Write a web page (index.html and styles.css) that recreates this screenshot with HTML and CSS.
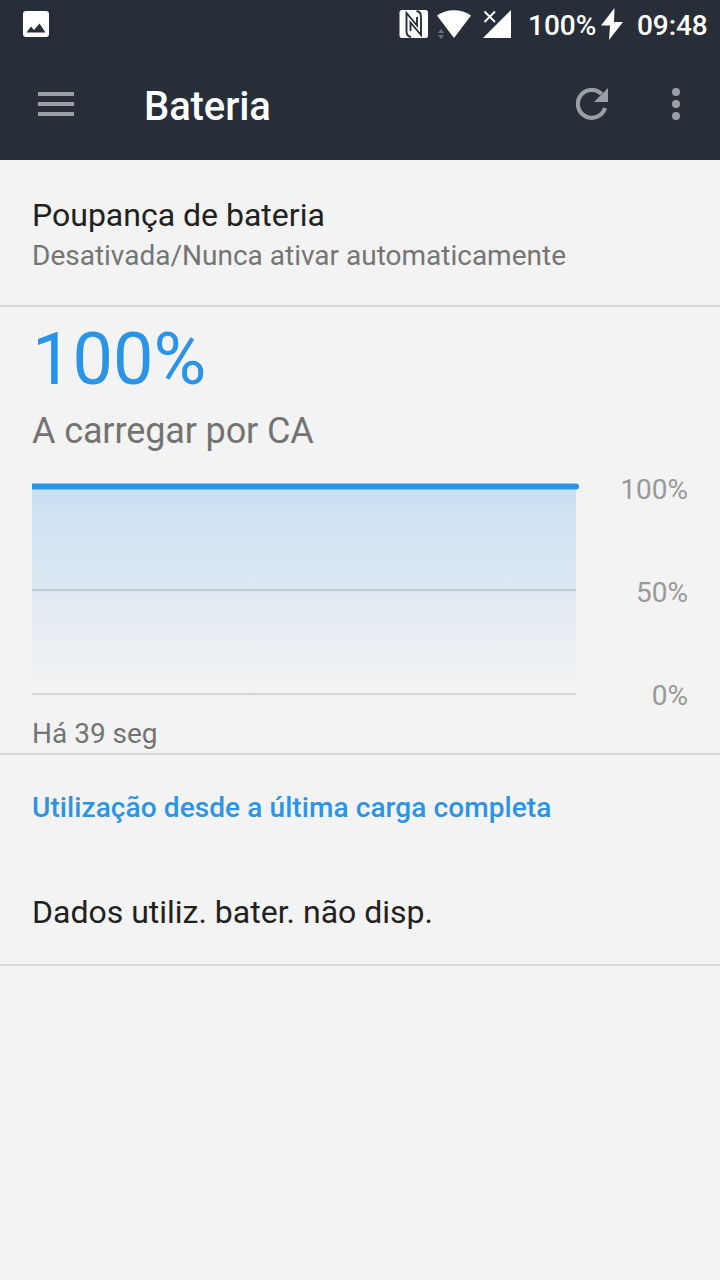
FILE: index.html
```html
<!DOCTYPE html>
<html lang="pt">
<head>
<meta charset="utf-8">
<title>Bateria</title>
<link rel="stylesheet" href="styles.css">
</head>
<body>
<header class="header">
  <div class="status">
    <svg class="status-photo" width="26" height="26" viewBox="0 0 26 26"><rect width="26" height="26" rx="3" fill="#fff"/><path d="M3.500 21.500 8 15.500l3 3.500 5.500-6.500 6 9z" fill="#272e38"/></svg>
    <svg class="status-nfc" width="30" height="30" viewBox="0 0 30 30"><rect x=".5" y="1" width="28.5" height="28" rx="2.500" fill="#fff"/><g fill="none" stroke="#272e38" stroke-width="1.900"><path d="M12 28C8.500 27.500 7.500 25.500 7.500 22V4L18 16.500V8"/><path d="M17.500 2C21 2.500 22 4.500 22 8V26L11.500 13.500V22"/></g></svg>
    <svg class="status-wifi" width="44" height="30" viewBox="0 0 44 30"><path d="M7 6.500C17-.5 31-.5 41 6.500L24 29z" fill="#fff"/><path d="m8 24 3-4 3 4zM8 26h6l-3 4z" fill="#69717b"/></svg>
    <svg class="status-signal" width="30" height="30" viewBox="0 0 30 30"><path d="M29 1v28H1z" fill="#fff"/><path d="m2.500 2.500 10.500 10.500M13 2.500 2.500 13" stroke="#fff" stroke-width="1.800"/></svg>
    <span class="status-text status-level">100%</span>
    <svg class="status-bolt" width="22" height="32" viewBox="0 0 22 32"><path d="M13.500 0 0 17.500h9L8 32l14-18h-9z" fill="#fff"/></svg>
    <span class="status-text status-clock">09:48</span>
  </div>
  <div class="toolbar">
    <svg class="menu" width="36" height="24" viewBox="0 0 36 24" fill="#9b9fa5"><path d="M0 0h36v4H0zM0 10h36v4H0zM0 20h36v4H0z"/></svg>
    <h1 class="title">Bateria</h1>
    <svg class="refresh" width="32" height="32" viewBox="0 0 32 32"><path d="M29 20A13.900 13.900 0 1 1 25.500 6" fill="none" stroke="#9b9fa5" stroke-width="4.200"/><path d="M32 0v14H18z" fill="#9b9fa5"/></svg>
    <svg class="more" width="8" height="32" viewBox="0 0 8 32" fill="#9b9fa5"><circle cx="4" cy="4" r="4"/><circle cx="4" cy="16" r="4"/><circle cx="4" cy="28" r="4"/></svg>
  </div>
</header>
<main>
  <section class="saver">
    <div class="primary">Poupança de bateria</div>
    <div class="secondary">Desativada/Nunca ativar automaticamente</div>
  </section>
  <section class="battery">
    <div class="level">100%</div>
    <div class="state">A carregar por CA</div>
    <div class="graph">
      <svg class="chart" width="548" height="212" viewBox="0 0 548 212">
        <defs><linearGradient id="fade" x1="0" y1="0" x2="0" y2="1"><stop offset="0" stop-color="#c9e0f3"/><stop offset=".5" stop-color="#dce8f2"/><stop offset=".55" stop-color="#e2eaf3"/><stop offset="1" stop-color="#f3f3f3"/></linearGradient></defs>
        <rect y="4" width="544" height="206" fill="url(#fade)"/>
        <path d="M0 106h544v2H0z" fill="#becad4"/>
        <path d="M0 210h544v2H0z" fill="#d6d6d6"/>
        <path d="M0 .5h544a3 3 0 0 1 0 6H0z" fill="#2b94e7"/>
      </svg>
      <div class="scale"><span>100%</span><span>50%</span><span>0%</span></div>
    </div>
    <div class="elapsed">Há 39 seg</div>
  </section>
  <section class="usage">
    <h2 class="usage-title">Utilização desde a última carga completa</h2>
    <div class="primary">Dados utiliz. bater. não disp.</div>
  </section>
</main>
</body>
</html>
```
FILE: styles.css
```css
* { box-sizing: border-box; }
body { margin: 0; min-height: 1280px; background: #f3f3f3; color: #212121; font-family: Roboto, "Noto Sans", sans-serif; }
svg { display: block; flex: none; }
h1, h2 { margin: 0; }
.header { height: 160px; background: #272e38; color: #fff; }
.status { display: flex; align-items: flex-start; height: 48px; padding: 9px 12px 0 23px; }
.status-photo { margin-top: 2px; }
.status-nfc { margin-left: auto; }
.status-wifi { margin-left: 1px; }
.status-signal { margin-left: 8px; }
.status-text { margin-top: 1px; font-size: 28px; line-height: 32px; font-weight: 500; white-space: nowrap; }
.status-level { margin-left: 16px; width: 69px; }
.status-bolt { margin-left: 4px; margin-top: -1px; }
.status-clock { margin-left: 14px; width: 71px; letter-spacing: -.1px; }
.toolbar { display: flex; align-items: center; height: 112px; padding: 0 40px 0 38px; }
.title { flex: 1; margin: 5px 0 0 70px; font-size: 40px; line-height: 48px; font-weight: 500; letter-spacing: -.1px; }
.more { margin-left: 64px; }
.saver { height: 147px; padding: 36px 32px 0; border-bottom: 2px solid #d8d8d8; }
.primary { font-size: 32px; line-height: 38px; }
.secondary { margin-top: 5px; font-size: 28px; line-height: 34px; color: #757575; }
.battery { height: 448px; padding: 11px 32px 0; border-bottom: 2px solid #d8d8d8; }
.level { font-size: 72px; line-height: 84px; color: #2b94e7; }
.state { margin-top: 8px; font-size: 36px; line-height: 42px; letter-spacing: -.12px; color: #737373; }
.graph { display: flex; justify-content: space-between; margin-top: 31px; height: 212px; }
.scale { display: flex; flex-direction: column; justify-content: space-between; align-items: flex-end; height: 240px; margin-top: -10px; font-size: 28px; line-height: 34px; color: #999; }
.elapsed { margin-top: 22px; font-size: 28px; line-height: 34px; color: #737373; }
.usage { height: 211px; padding: 36px 32px 0; border-bottom: 2px solid #d8d8d8; }
.usage-title { margin-bottom: 68px; font-size: 28px; line-height: 34px; font-weight: 500; letter-spacing: .09px; color: #2b94e7; }
```
